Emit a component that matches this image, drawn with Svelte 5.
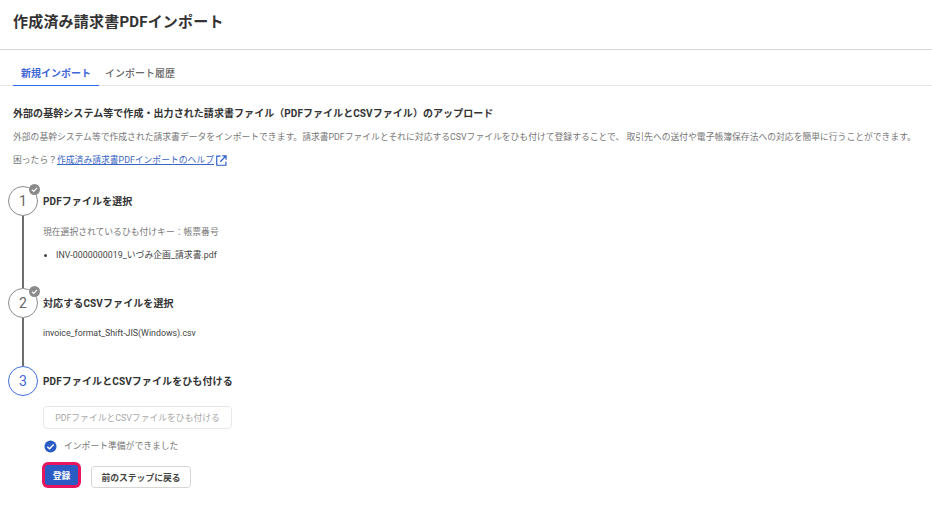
<script>
  const steps = [
    { no: 1, title: "PDFファイルを選択", done: true },
    { no: 2, title: "対応するCSVファイルを選択", done: true },
    { no: 3, title: "PDFファイルとCSVファイルをひも付ける", done: false }
  ];
</script>

<main>
  <header class="head">
    <h1>作成済み請求書PDFインポート</h1>
  </header>

  <nav class="tabs">
    <span class="tab active">新規インポート</span>
    <span class="tab">インポート履歴</span>
  </nav>

  <section class="intro">
    <h2>外部の基幹システム等で作成・出力された請求書ファイル（PDFファイルとCSVファイル）のアップロード</h2>
    <p class="desc">外部の基幹システム等で作成された請求書データをインポートできます。請求書PDFファイルとそれに対応するCSVファイルをひも付けて登録することで、 取引先への送付や電子帳簿保存法への対応を簡単に行うことができます。</p>
    <p class="help">
      困ったら？<span class="link">作成済み請求書PDFインポートのヘルプ</span>
      <svg class="ext" viewBox="0 0 12 12" width="11" height="11" fill="none" stroke="#2b5fc7" stroke-width="1.3">
        <path d="M5 1.2H.8v10h10V7" />
        <path d="M4.6 7.4 10.6 1.4M6.8 1h4.2v4.2" />
      </svg>
    </p>
  </section>

  <div class="stepper">
    {#each steps as step}
      <div class="step-head">
        <div class="circle" class:current={!step.done}>
          {step.no}
          {#if step.done}
            <svg class="badge" viewBox="0 0 12 12" width="11" height="11">
              <circle cx="6" cy="6" r="6" fill="#8a8a8a" />
              <path d="M3.2 6.2 5.2 8 8.8 4.2" fill="none" stroke="#fff" stroke-width="1.3" />
            </svg>
          {/if}
        </div>
        <h3>{step.title}</h3>
      </div>

      {#if step.no === 1}
        <div class="step-body one">
          <p class="muted">現在選択されているひも付けキー：帳票番号</p>
          <ul>
            <li>INV-0000000019_いづみ企画_請求書.pdf</li>
          </ul>
        </div>
      {:else if step.no === 2}
        <div class="step-body two">
          <p class="file">invoice_format_Shift-JIS(Windows).csv</p>
        </div>
      {:else}
        <div class="step-last">
          <button class="btn disabled" disabled>PDFファイルとCSVファイルをひも付ける</button>
          <div class="ready">
            <svg viewBox="0 0 14 14" width="13" height="13">
              <circle cx="7" cy="7" r="6.5" fill="#2b5cc4" />
              <path d="M3.6 7.2 6 9.4 10.4 4.8" fill="none" stroke="#fff" stroke-width="1.5" />
            </svg>
            <span>インポート準備ができました</span>
          </div>
          <div class="actions">
            <button class="btn primary">登録</button>
            <button class="btn back">前のステップに戻る</button>
          </div>
        </div>
      {/if}
    {/each}
  </div>
</main>

<style>
  :global(body) {
    margin: 0;
    background: #fff;
    color: #333;
    font-family: Roboto, "Noto Sans CJK JP", sans-serif;
  }
  main {
    height: 507px;
    overflow: hidden;
  }
  .head {
    height: 50px;
    padding: 12px 13px 0;
    box-sizing: border-box;
    border-bottom: 1px solid #d4d4d4;
  }
  h1 {
    margin: 0;
    font-size: 15px;
    line-height: 20px;
    font-weight: 700;
    letter-spacing: 0.2px;
    color: #333;
  }
  .tabs {
    display: flex;
    height: 36px;
    padding: 0 13px;
    box-sizing: border-box;
    border-bottom: 1px solid #e6e6e6;
    align-items: flex-end;
  }
  .tab {
    height: 20px;
    padding: 0 8px;
    font-size: 10px;
    line-height: 16px;
    font-weight: 500;
    color: #666;
    margin-bottom: -1px;
    border-bottom: 1px solid transparent;
    box-sizing: border-box;
  }
  .tab:nth-child(2) {
    padding-left: 6px;
  }
  .tab.active {
    font-weight: 700;
    color: #3f66d8;
    border-bottom-color: #2f6bf0;
  }
  .intro {
    padding: 20px 13px 0;
  }
  h2 {
    margin: 0;
    font-size: 10px;
    line-height: 16px;
    font-weight: 700;
    letter-spacing: 0.06px;
    color: #333;
  }
  .desc {
    margin: 7px 0 0;
    font-size: 8.8px;
    line-height: 16px;
    color: #777;
    white-space: nowrap;
  }
  .help {
    margin: 7px 0 0;
    display: flex;
    align-items: center;
    font-size: 8.8px;
    line-height: 16px;
    color: #777;
  }
  .link {
    color: #3b66c4;
    text-decoration: underline;
  }
  .ext {
    margin-left: 2px;
  }
  .stepper {
    padding: 18px 8px 0;
  }
  .step-head {
    display: flex;
    align-items: center;
    height: 30px;
  }
  .circle {
    position: relative;
    flex: none;
    width: 30px;
    height: 30px;
    box-sizing: border-box;
    border: 1px solid #8c8c8c;
    border-radius: 50%;
    display: flex;
    align-items: center;
    justify-content: center;
    font-size: 14px;
    color: #666;
  }
  .circle.current {
    border-color: #3f6fe0;
    color: #3f66d8;
  }
  .badge {
    position: absolute;
    top: -3px;
    right: -3px;
  }
  h3 {
    margin: 1px 0 0 5px;
    font-size: 10px;
    line-height: 16px;
    font-weight: 700;
    letter-spacing: 0.1px;
    color: #333;
  }
  .step-body {
    margin-left: 14px;
    border-left: 2px solid #6e6e6e;
    padding-left: 19px;
    box-sizing: border-box;
    font-size: 8.8px;
    line-height: 14px;
  }
  .step-body.one {
    height: 72px;
    padding-top: 9px;
  }
  .step-body.two {
    height: 48px;
    padding-top: 8px;
  }
  .step-body p {
    margin: 0;
  }
  .muted {
    color: #777;
  }
  .file {
    color: #444;
  }
  ul {
    margin: 9px 0 0;
    padding-left: 13px;
    color: #444;
    letter-spacing: 0.05px;
  }
  .step-last {
    padding: 10px 0 0 35px;
  }
  .btn {
    height: 22px;
    padding: 0;
    background: #fff;
    border: 1px solid #d6d6d6;
    border-radius: 4px;
    font-family: inherit;
    font-size: 8.8px;
    font-weight: 700;
    color: #444;
    white-space: nowrap;
  }
  .btn.disabled {
    display: block;
    width: 189px;
    height: 23px;
    font-weight: 400;
    color: #a8a8a8;
    border-color: #e8e8e8;
  }
  .ready {
    display: flex;
    align-items: center;
    gap: 7px;
    margin-top: 10px;
    padding-left: 1px;
    font-size: 8.8px;
    line-height: 14px;
    color: #777;
  }
  .actions {
    display: flex;
    align-items: flex-start;
    margin-top: 13px;
  }
  .btn.primary {
    height: 20px;
    width: 33px;
    margin: -1px 0 0 2px;
    background: #2b5cc4;
    border: none;
    color: #fff;
    box-shadow: 0 0 0 3px #e8155f;
    border-radius: 3px;
  }
  .btn.back {
    width: 100px;
    margin-left: 13px;
  }
</style>
